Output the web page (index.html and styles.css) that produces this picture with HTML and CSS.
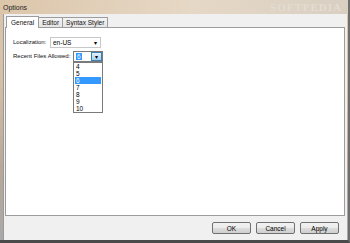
FILE: index.html
```html
<!DOCTYPE html>
<html lang="en">

<head>
    <meta charset="UTF-8">
    <title>Options</title>
    <link rel="stylesheet" href="styles.css">
</head>

<body>
    <div class="window">
        <div class="titlebar">
            <span class="title">Options</span>
            <span class="mark">SOFTPEDIA</span>
        </div>
        <div class="client">
            <div class="tabs">
                <div class="tab selected">General</div>
                <div class="tab">Editor</div>
                <div class="tab">Syntax Styler</div>
            </div>
            <div class="panel">
                <div class="row">
                    <span class="label first">Localization:</span>
                    <div class="combo wide">
                        <span class="value">en-US</span>
                        <span class="arrow">&#9662;</span>
                    </div>
                </div>
                <div class="row">
                    <span class="label second">Recent Files Allowed:</span>
                    <div class="combo narrow">
                        <span class="value"><span class="sel">6</span></span>
                        <span class="arrow hot">&#9662;</span>
                        <div class="droplist">
                            <div>4</div>
                            <div>5</div>
                            <div class="active">6</div>
                            <div>7</div>
                            <div>8</div>
                            <div>9</div>
                            <div>10</div>
                        </div>
                    </div>
                </div>
            </div>
            <div class="footer">
                <div class="btn">OK</div>
                <div class="btn">Cancel</div>
                <div class="btn">Apply</div>
            </div>
        </div>
    </div>
</body>

</html>
```

FILE: styles.css
```css
* {
    box-sizing: border-box;
}

body {
    margin: 0;
    background: #6b6b6b;
    font-family: "Liberation Sans", Arial, sans-serif;
    font-size: 6.5px;
    color: #000;
    white-space: nowrap;
}

.window {
    width: 350px;
    height: 243px;
    background: linear-gradient(to bottom, #dcc6ac 0%, #d8c2a6 30%, #b8a898 70%, #a8a8a8 100%);
    border-right: 2px solid #6e6e6e;
    border-bottom: 3px solid #4a4a4a;
    display: flex;
    flex-direction: column;
    padding: 0 1px 0 3px;
}

.titlebar {
    height: 14px;
    display: flex;
    align-items: center;
    justify-content: space-between;
    background: linear-gradient(to right, #dcc6aa, #e6d8c6 55%, #d8cfc2);
    margin: 0 -1px 0 -3px;
    padding: 0 6px 0 3px;
}

.title {
    font-size: 7px;
    color: #222;
}

.mark {
    font-family: "Liberation Serif", serif;
    font-size: 11px;
    font-weight: bold;
    letter-spacing: 1px;
    color: #e4dcd1;
}

.client {
    flex: 1;
    background: #f0f0f0;
    display: flex;
    flex-direction: column;
    padding: 1px 0 0 1px;
    border-left: 1px solid #9a9a9a;
}

.tabs {
    display: flex;
    align-items: flex-end;
    height: 12px;
    padding-left: 1px;
}

.tab {
    height: 10px;
    padding: 0 3px;
    display: flex;
    align-items: center;
    background: linear-gradient(to bottom, #f4f4f4, #e4e4e4);
    border: 1px solid #9c9c9c;
    border-bottom: none;
    margin-right: -1px;
    color: #111;
}

.tab.selected {
    height: 12px;
    background: #fff;
    position: relative;
    z-index: 1;
    margin-bottom: -1px;
    padding: 0 4px;
}

.panel {
    height: 189px;
    margin-right: 2px;
    background: #fff;
    border: 1px solid #9c9c9c;
    padding: 7px 0 0 7px;
    position: relative;
}

.row {
    display: flex;
    align-items: center;
    height: 14px;
}

.label {
    color: #111;
    flex-shrink: 0;
    font-size: 6px;
}

.label.first {
    width: 37px;
}

.label.second {
    width: 60px;
}

.combo {
    height: 11px;
    border: 1px solid #a9a9a9;
    display: flex;
    align-items: center;
    justify-content: space-between;
    position: relative;
    background: #fff;
    flex-shrink: 0;
}

.combo.wide {
    width: 51px;
    border-color: #c8c8c8;
}

.combo.narrow {
    width: 30px;
    border-color: #7a7a7a;
}

.value {
    padding-left: 2px;
}

.sel {
    background: #3399ff;
    color: #fff;
    padding: 0 1px;
}

.arrow {
    font-size: 6px;
    width: 10px;
    text-align: center;
}

.arrow.hot {
    height: 9px;
    width: 11px;
    line-height: 9px;
    background: linear-gradient(to bottom, #e2f1fb, #a6d2ef);
    border: 1px solid #3c7fb1;
}

.droplist {
    position: absolute;
    top: 10px;
    left: -1px;
    width: 30px;
    border: 1px solid #7a7a7a;
    background: #fff;
    z-index: 2;
    padding: 0 1px;
}

.droplist div {
    height: 7px;
    line-height: 7px;
    padding-left: 1px;
}

.droplist .active {
    background: #3399ff;
    color: #fff;
}

.footer {
    flex: 1;
    display: flex;
    justify-content: flex-end;
    align-items: center;
    gap: 5px;
    padding-right: 8px;
}

.btn {
    width: 39px;
    height: 12px;
    border: 1px solid #707070;
    border-radius: 2px;
    background: linear-gradient(to bottom, #f2f2f2 0%, #ebebeb 50%, #dddddd 51%, #cfcfcf 100%);
    display: flex;
    align-items: center;
    justify-content: center;
}
```
